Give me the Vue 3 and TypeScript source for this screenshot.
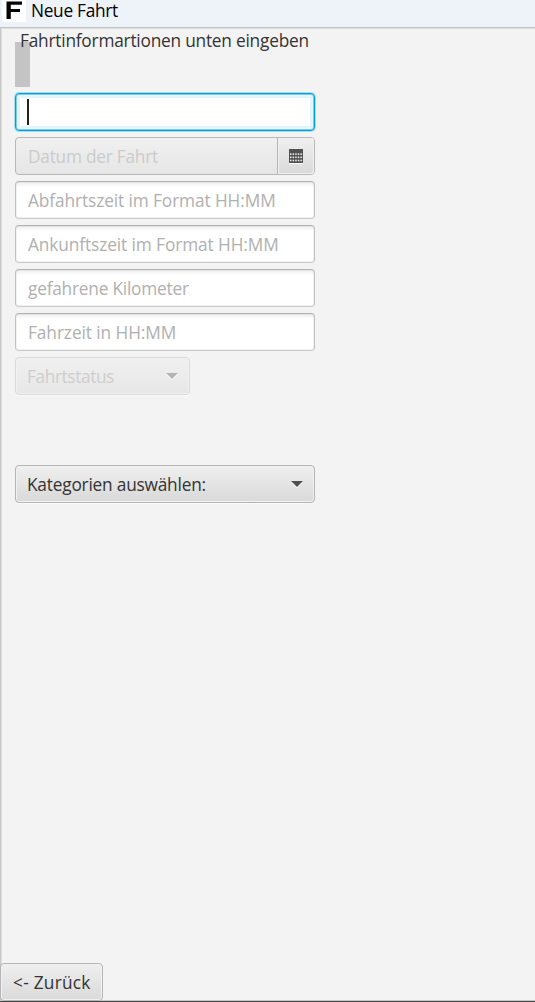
<script setup lang="ts">
interface Field {
  label: string
  cls: string
}
const fields: Field[] = [
  { label: 'Abfahrtszeit im Format HH:MM', cls: 'departure' },
  { label: 'Ankunftszeit im Format HH:MM', cls: 'arrival' },
  { label: 'gefahrene Kilometer', cls: 'distance' },
  { label: 'Fahrzeit in HH:MM', cls: 'duration' },
]
const columns = [0, 1, 2, 3, 4]
const rows = [0, 1, 2]
</script>

<template>
  <div class="window">
    <header class="titlebar">
      <svg class="logo" width="24" height="22" viewBox="0 0 24 22">
        <rect width="24" height="22" fill="#fff" />
        <path d="M4.5 1.5H20v3.3H8.8v4.2H18v3H8.8v7H4.5z" fill="#050505" />
      </svg>
      <span class="title">Neue Fahrt</span>
    </header>
    <main class="content">
      <div class="intro">
        <div class="thumb"></div>
        <span class="heading">Fahrtinformartionen unten eingeben</span>
      </div>
      <form class="form" @submit.prevent>
        <div class="control input focused"><i class="caret"></i></div>
        <div class="control date">
          <span class="date-text">Datum der Fahrt</span>
          <div class="calendar">
            <svg width="14" height="15" viewBox="0 0 14 15">
              <rect y="1" width="14" height="14" fill="#fff" />
              <rect width="14" height="14" fill="#505050" />
              <g fill="#eeeeee">
                <template v-for="r in rows" :key="r">
                  <rect v-for="c in columns" :key="c" :x="1 + c * 2.6" :y="4.3 + r * 3.2" width="1.5" height="1.6" />
                </template>
              </g>
            </svg>
          </div>
        </div>
        <div v-for="f in fields" :key="f.cls" class="control input">
          <span :class="f.cls">{{ f.label }}</span>
        </div>
        <div class="control combo status">
          <span class="status-text">Fahrtstatus</span>
          <svg class="arrow" width="12" height="7" viewBox="0 0 12 7"><path d="M0 1h12L6 7z" fill="#fff" /><path d="M0 0h12L6 6z" fill="#b3b3b3" /></svg>
        </div>
        <div class="control combo category">
          <span class="category-text">Kategorien auswählen:</span>
          <svg class="arrow" width="12" height="7" viewBox="0 0 12 7"><path d="M0 1h12L6 7z" fill="#fff" /><path d="M0 0h12L6 6z" fill="#505050" /></svg>
        </div>
      </form>
      <button class="control back" type="button"><span>&lt;- Zurück</span></button>
    </main>
  </div>
</template>

<style>
body { margin: 0; overflow: hidden; }
</style>

<style scoped>
* { box-sizing: border-box; }
.window {
  display: flex;
  flex-direction: column;
  width: 535px;
  height: 1002px;
  background: #f3f3f3;
  font-family: "Open Sans", "Noto Sans", sans-serif;
  font-size: 17.3px;
  line-height: 24px;
  color: #333;
  white-space: nowrap;
  border-bottom: 1px solid #484848;
}
.titlebar {
  display: flex;
  flex: 0 0 27px;
  background: #edf3f8;
  color: #000;
}
.logo { margin-left: 2px; flex: none; }
.title { margin: -1px 0 0 5px; letter-spacing: -0.3px; }
.content {
  flex: 1;
  display: flex;
  flex-direction: column;
  align-items: flex-start;
  border-top: 1px solid #c3c3c3;
  box-shadow: inset 1px 0 #c8c8c8, inset 2px 0 #dedede, inset 0 1px #dedede, inset 0 -1px #c8c8c8;
}
.intro { display: flex; height: 59px; margin-left: 15px; }
.thumb { width: 15px; height: 45px; margin-top: 14px; background: #c4c4c4; }
.heading { margin: 1px 0 0 -10px; letter-spacing: -0.22px; position: relative; }
.form { display: flex; flex-direction: column; gap: 6px; margin: 6px 0 0 15px; }
.control {
  display: flex;
  align-items: center;
  width: 300px;
  height: 38px;
  border: 1px solid #b5b5b5;
  border-radius: 4px;
  padding: 0 12px;
}
.control span { padding-top: 2px; }
.input {
  color: #b0b0b0;
  background: linear-gradient(#ededed, #fff 5px);
  border-color: #b2b2b2 #c0c0c0 #cacaca;
  box-shadow: inset 0 0 0 1px rgba(190, 190, 190, 0.2);
}
.focused {
  background: #fff;
  border-color: #039ed3;
  box-shadow: 0 0 0 1px #a5dff3, inset 0 0 0 1px #7fcce8, inset 0 0 0 4px #e3f5fb;
  padding-left: 11px;
}
.caret { width: 1.5px; height: 26px; background: #222; }
.date {
  padding-right: 0;
  background: linear-gradient(#f0f0f0, #e6e6e6);
  color: #cbcbcb;
  border-color: #b8b8b8;
}
.date-text { flex: 1; letter-spacing: -0.24px; }
.calendar {
  display: flex;
  align-items: center;
  justify-content: center;
  width: 37px;
  height: 36px;
  border-left: 1px solid #b5b5b5;
  border-radius: 0 3px 3px 0;
  background: linear-gradient(#efefef, #dadada);
  box-shadow: inset 0 0 0 1px #f1f1f1;
}
.combo {
  justify-content: space-between;
  padding: 0 11px;
  background: linear-gradient(#efefef, #d9d9d9);
  box-shadow: inset 0 0 0 1px #f1f1f1, 0 1px #f9f9f9;
}
.status {
  width: 175px;
  color: #cecece;
  background: linear-gradient(#f0f0f0, #e7e7e7);
  border-color: #dadada;
}
.category { margin-top: 64px; }
.departure, .arrival { letter-spacing: -0.1px; }
.distance { letter-spacing: -0.22px; }
.duration { letter-spacing: -0.08px; }
.status-text { letter-spacing: -0.4px; }
.category-text { letter-spacing: -0.21px; }
.back {
  width: 103px;
  margin-top: auto;
  font: inherit;
  color: #333;
  background: linear-gradient(#efefef, #dadada);
  box-shadow: inset 0 0 0 1px #f1f1f1;
}
.back span { letter-spacing: 0.25px; }
</style>
